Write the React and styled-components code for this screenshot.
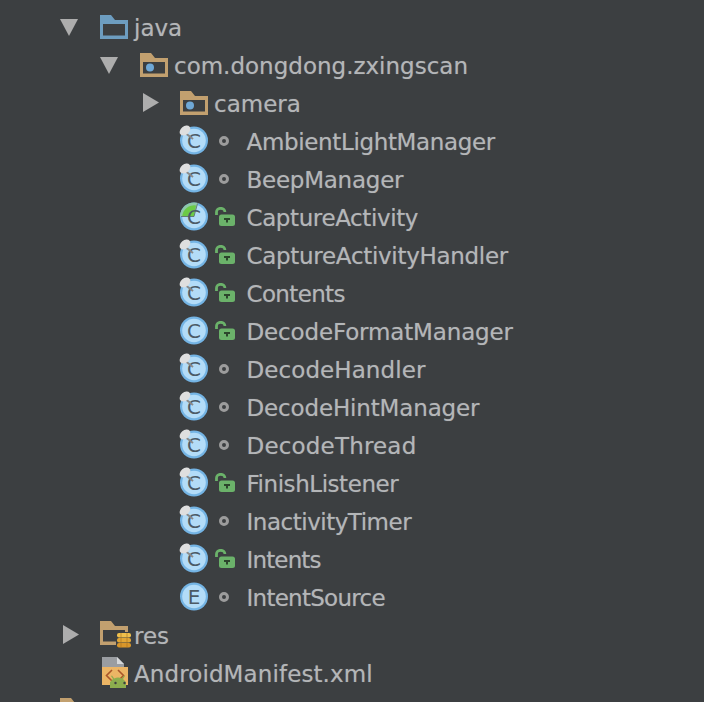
import styled, { createGlobalStyle } from "styled-components"

const GlobalStyle = createGlobalStyle`
  html, body {
    margin: 0;
    height: 702px;
    overflow: hidden;
    background: #3c3f41;
  }
`

// tracking evens out the width difference to the original UI font
const classes = [
  { name: "AmbientLightManager", pin: true, tracking: -0.35 },
  { name: "BeepManager", pin: true, tracking: -0.25 },
  { name: "CaptureActivity", open: true, coverage: true, tracking: -0.4 },
  { name: "CaptureActivityHandler", pin: true, open: true, tracking: -0.3 },
  { name: "Contents", pin: true, open: true, tracking: -0.65 },
  { name: "DecodeFormatManager", open: true },
  { name: "DecodeHandler", pin: true, tracking: 0.08 },
  { name: "DecodeHintManager", pin: true },
  { name: "DecodeThread", pin: true, tracking: 0.18 },
  { name: "FinishListener", pin: true, open: true, tracking: -0.45 },
  { name: "InactivityTimer", pin: true, tracking: -0.48 },
  { name: "Intents", pin: true, open: true, tracking: -0.85 },
  { name: "IntentSource", letter: "E", tracking: -0.73 },
]

function Arrow({ open }) {
  return (
    <svg width="18" height="20" viewBox="0 0 18 20">
      {open ? (
        <path d="M0 2h18L9 19z" fill="#adadad" />
      ) : (
        <path d="M1 0l16 9.500L1 19z" fill="#adadad" />
      )}
    </svg>
  )
}

function Folder({ color = "#c2a06f", dot }) {
  return (
    <svg width="28" height="24" viewBox="0 0 28 24">
      <path d="M0 0h11l4 5h13v19H0z" fill={color} />
      <rect x="3" y="9" width="22" height="11.500" fill="#3c3f41" />
      {dot && <circle cx="10" cy="14.500" r="4" fill="#6fa8d6" />}
    </svg>
  )
}

function ResFolder() {
  return (
    <svg width="32" height="28" viewBox="0 0 32 28" style={{ overflow: "visible" }}>
      <path d="M0 0h11l4 5h13v19H0z" fill="#c2a06f" />
      <rect x="3" y="9" width="22" height="11.500" fill="#3c3f41" />
      <rect x="16" y="11" width="15" height="16" rx="3" fill="#3c3f41" />
      <rect x="17" y="12" width="14" height="4.500" rx="2" fill="#f0c04c" />
      <rect x="17" y="17" width="14" height="4.500" rx="2" fill="#e2a736" />
      <rect x="17" y="22" width="14" height="4.500" rx="2" fill="#d8962a" />
      <path d="M21 12v14.500M27 12v14.500" stroke="#a8701f" strokeWidth="1" opacity="0.6" />
    </svg>
  )
}

function ManifestIcon() {
  return (
    <svg width="32" height="32" viewBox="0 0 32 32" style={{ overflow: "visible" }}>
      <path d="M2 0h15l7 7v4H5v16H2z" fill="#9a9da1" />
      <path d="M17 0l7 7h-7z" fill="#d6d8da" />
      <rect x="2" y="10" width="26" height="18" fill="#ecb565" />
      <path d="M12 13l-5.500 5.500L12 24M18 13l5.500 5.500L18 24" fill="none" stroke="#a9562a" strokeWidth="1.600" />
      <path d="M10 31v-6l3-3-2-3 1-.6 2.200 3a9 9 0 0 1 7.600 0l2.200-3 1 .6-2 3 3 3v6z" fill="#8cae4e" />
      <circle cx="15.500" cy="26" r="1.200" fill="#3c3f41" />
      <circle cx="24.500" cy="26" r="1.200" fill="#3c3f41" />
    </svg>
  )
}

function ClassIcon({ letter = "C", pin, coverage }) {
  return (
    <svg width="32" height="34" viewBox="0 0 32 34">
      <circle cx="16" cy="16.500" r="14" fill="#74b4e4" />
      <circle cx="16" cy="16.500" r="11.800" fill="#b3dcf8" />
      {coverage && (
        <>
          <path d="M20 3.100A14 14 0 0 0 2 16.500h14z" fill="#8fc8a8" />
          <path d="M18 5.500A11.800 11.800 0 0 0 4.200 16.500H16z" fill="#6ccb46" />
          <path d="M3 16.500h13l3.500-13" fill="none" stroke="#5b6a70" strokeWidth="0.800" />
        </>
      )}
      <text
        x="16"
        y="23.500"
        textAnchor="middle"
        fontFamily="'DejaVu Sans', sans-serif"
        fontSize="20"
        fill="#4c5a66"
      >
        {letter}
      </text>
      {pin && (
        <>
          <path d="M6 8l9 7" stroke="#8a8a8a" strokeWidth="2" />
          <ellipse cx="7" cy="6.500" rx="6" ry="4.200" transform="rotate(-40 7 6.500)" fill="#dfdfdf" />
        </>
      )}
    </svg>
  )
}

function OpenLock() {
  return (
    <svg width="20" height="20" viewBox="0 0 20 20">
      <path d="M1.500 8V5a4.200 3.700 0 0 1 8.400 0" fill="none" stroke="#6bb26a" strokeWidth="2.800" />
      <rect x="4" y="7.500" width="16" height="11.500" rx="2.500" fill="#6bb26a" />
      <path d="M9 12h6M12 12v3.500" stroke="#2c452c" strokeWidth="2" />
    </svg>
  )
}

export default function App() {
  return (
    <Tree>
      <GlobalStyle />
      <Row>
        <ArrowSlot>
          <Arrow open />
        </ArrowSlot>
        <Folder color="#6d9dc0" />
        <FolderLabel>java</FolderLabel>
      </Row>
      <Row depth={1}>
        <ArrowSlot>
          <Arrow open />
        </ArrowSlot>
        <Folder dot />
        <FolderLabel>com.dongdong.zxingscan</FolderLabel>
      </Row>
      <Row depth={2}>
        <ArrowSlot $right>
          <Arrow />
        </ArrowSlot>
        <Folder dot />
        <FolderLabel>camera</FolderLabel>
      </Row>
      {classes.map((item) => (
        <LeafRow key={item.name}>
          <ClassIcon letter={item.letter} pin={item.pin} coverage={item.coverage} />
          <Visibility>{item.open ? <OpenLock /> : <PackageDot />}</Visibility>
          <Label $tracking={item.tracking}>{item.name}</Label>
        </LeafRow>
      ))}
      <Row>
        <ArrowSlot $right>
          <Arrow />
        </ArrowSlot>
        <IconSlot>
          <ResFolder />
        </IconSlot>
        <FolderLabel>res</FolderLabel>
      </Row>
      <Row>
        <ArrowSlot />
        <IconSlot>
          <ManifestIcon />
        </IconSlot>
        <FolderLabel $tracking={0.1}>AndroidManifest.xml</FolderLabel>
      </Row>
      <LastRow>
        <Folder />
      </LastRow>
    </Tree>
  )
}

const Tree = styled.div`
  height: 702px;
  overflow: hidden;
  padding-top: 8px;
  box-sizing: border-box;
  font-family: "DejaVu Sans", sans-serif;
  color: #b4b6b8;
`

const Row = styled.div`
  display: flex;
  align-items: center;
  height: 38px;
  padding-left: ${({ depth = 0 }) => 60 + depth * 40}px;
`

const LeafRow = styled(Row)`
  padding-left: 178px;
`

const LastRow = styled(Row)`
  margin-top: -1px;
`

const ArrowSlot = styled.div`
  display: flex;
  width: 40px;
  flex-shrink: 0;
  padding-left: ${({ $right }) => ($right ? 2 : 0)}px;
  box-sizing: border-box;
`

const IconSlot = styled.div`
  display: flex;
  width: 28px;
`

const Visibility = styled.div`
  display: flex;
  align-items: center;
  justify-content: center;
  width: 30px;
`

const PackageDot = styled.span`
  width: 4px;
  height: 4px;
  border: 3px solid #9c9c9c;
  border-radius: 50%;
  margin-right: 2px;
`

const Label = styled.span`
  margin-left: 6.500px;
  padding-top: 2px;
  font-size: 23px;
  letter-spacing: ${({ $tracking = -0.15 }) => $tracking}px;
  white-space: nowrap;
  text-shadow: 0 0 1px rgba(180, 182, 184, 0.45);
`

const FolderLabel = styled(Label)`
  margin-left: 6px;
  letter-spacing: ${({ $tracking = 0 }) => $tracking}px;
`
